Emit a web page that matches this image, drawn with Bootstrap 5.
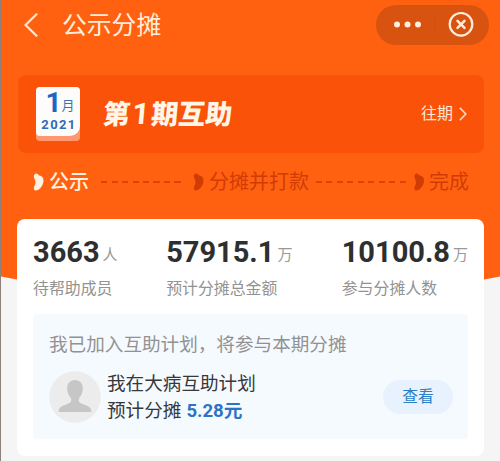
<!DOCTYPE html>
<html lang="zh-CN">
<head>
<meta charset="utf-8">
<meta name="viewport" content="width=device-width, initial-scale=1">
<title>公示分摊</title>
<link href="https://cdn.jsdelivr.net/npm/bootstrap@5.3.0/dist/css/bootstrap.min.css" rel="stylesheet">
<style>
body{font-family:Roboto,"Noto Sans CJK SC",sans-serif;background:#f5f5f5;line-height:1;color:#303133;}
svg{display:block;flex:none}
.screen{width:500px;height:461px;border-left:1px solid #8d7f7b;padding:0 16px}
.backdrop{left:0;top:0;z-index:0}
.topbar{height:50px;padding:0 0 0 7px;margin-right:-5px}
.topbar h1{font-size:24.8px;font-weight:400;color:#ffeedd;margin:2px 0 0 24px;line-height:40px}
.capsule{width:113px;height:40px;background:#d95310;border-radius:20px}
.period{height:78px;margin:25px 0 0 1px;background:#fa5208;border-radius:8px;padding:0 17px 0 18px}
.period h2{font-size:27px;font-weight:900;color:#fff6e8;margin:0 0 0 23px;line-height:40px;transform:skewX(-5deg)}
.period h2 span{font-weight:700;font-size:30px;margin:0 2px}
.past{font-size:16px;color:#ffe9d5;line-height:24px;gap:6px}
.calendar-box{width:44px;height:54px;background:#ff9870;border-radius:4px}
.calendar-sheet{width:44px;height:49px;background:#fdfcfb;border-radius:4px 4px 10px 4px;color:#2c6cb8;padding-top:5px}
.month{font-size:28px;font-weight:700;line-height:22px;color:#1c66c6;padding-left:4px}
.month small{font-size:13px;font-weight:400;line-height:14px;color:#3975b4;padding-bottom:1px}
.year{font-size:13px;font-weight:700;letter-spacing:1.4px;line-height:13px;margin-top:4px;padding-left:2px}
.steps{height:56px;margin:0 15px 0 15px;color:#d13c05;font-size:20px;line-height:30px;padding-top:2px}
.steps .now{color:#fff0df;font-weight:500}
.dash{height:2px;background:repeating-linear-gradient(90deg,#dc4305 0 6px,transparent 6px 10.5px)}
.dash-a{width:80px;margin:0 11px 0 12px}
.dash-b{width:91px;margin:0 6px 0 7px}
.summary{height:237px;margin-top:10px;border-radius:8px;background:#fff;padding:17px 16px 0}
.figure-row{height:78px}
.amount{font-size:29px;font-weight:700;line-height:32px;color:#2d2f31}
.unit{font-size:15px;color:#999;line-height:20px;margin:6px 0 0 3px}
.caption-text{font-size:15.9px;color:#929292;line-height:24px;margin-top:9px}
.stat-a{width:133.5px}
.stat-b{width:176px}
.joined{height:125px;background:#f5faff;border-radius:4px;padding:17px 15px 0 16px;font-size:18.6px}
.joined p{margin:0 0 10px;color:#929292;line-height:28px}
.mine{line-height:27px;color:#36383a;margin:2px 0 0 6px}
.mine strong{font-size:18.6px;color:#2c73c5;margin-left:5px}
.view-btn,.view-btn:hover{width:70px;height:34px;background:#e8f1fe;color:#2c7fc5;border:0;font-size:15.8px;line-height:1;padding:0}
</style>
<script src="https://cdn.jsdelivr.net/npm/bootstrap@5.3.0/dist/js/bootstrap.bundle.min.js"></script>
</head>
<body class="overflow-hidden">
<svg width="0" height="0" class="position-absolute" aria-hidden="true">
  <symbol id="petal" viewBox="0 0 11 18"><path fill="currentColor" d="M1.600 1.300C2.800-.1 5 .5 6 2.500 9 2.300 10.700 4.800 10.500 8 10.300 11.600 7.800 15.600 4.800 17.100 2.700 18.100.8 17.100.8 15.200.8 13.400 2.400 12.300 2.500 9.600 2.500 7.400 1.500 6.200 1.100 4.800.7 3.400.8 2.200 1.600 1.300Z"/></symbol>
</svg>
<div class="screen position-relative">
  <svg class="backdrop position-absolute" width="499" height="300" viewBox="0 0 499 300" aria-hidden="true"><path fill="#ff6110" d="M0 0H499V276.500Q250 328 0 276.500Z"/></svg>
  <div class="position-relative">
    <header class="topbar d-flex align-items-center">
      <svg width="14" height="24" viewBox="0 0 14 24" fill="none" stroke="#ffe9d3" stroke-width="2.200" stroke-linecap="round" stroke-linejoin="round"><path d="M12.500 1.300 1.500 12l11 10.700"/></svg>
      <h1>公示分摊</h1>
      <div class="capsule ms-auto">
        <svg width="113" height="40" viewBox="0 0 113 40"><g fill="#ffeedd"><circle cx="21" cy="19.500" r="3"/><circle cx="31.500" cy="19.500" r="3"/><circle cx="42" cy="19.500" r="3"/></g><path stroke="#d34f10" d="M58.500 11v18"/><g fill="none" stroke="#ffeedd" stroke-linecap="round"><circle cx="85" cy="19.300" r="11.300" stroke-width="2.200"/><path stroke-width="2.500" d="m81.500 15.800 7 7m0-7-7 7"/></g></svg>
      </div>
    </header>
    <section class="period d-flex align-items-center">
      <div class="calendar-box">
        <div class="calendar-sheet d-flex flex-column align-items-center">
          <div class="month d-flex align-items-end">1<small>月</small></div>
          <div class="year">2021</div>
        </div>
      </div>
      <h2>第<span>1</span>期互助</h2>
      <a class="past ms-auto d-flex align-items-center text-decoration-none">往期<svg width="8" height="14" viewBox="0 0 8 14" fill="none" stroke="#ffdcc0" stroke-width="1.600"><path d="m.8.8 6 6.200-6 6.200"/></svg></a>
    </section>
    <div class="steps d-flex align-items-center text-nowrap">
      <div class="now d-flex align-items-center"><svg class="me-1" width="13" height="18"><use href="#petal"/></svg>公示</div>
      <div class="dash dash-a"></div>
      <div class="d-flex align-items-center"><svg class="me-1" width="13" height="18"><use href="#petal"/></svg>分摊并打款</div>
      <div class="dash dash-b"></div>
      <div class="d-flex align-items-center"><svg class="me-1" width="12" height="18"><use href="#petal"/></svg>完成</div>
    </div>
    <main class="summary">
      <div class="figure-row d-flex">
        <div class="stat-a"><div class="d-flex align-items-center"><span class="amount">3663</span><span class="unit">人</span></div><div class="caption-text">待帮助成员</div></div>
        <div class="stat-b"><div class="d-flex align-items-center"><span class="amount">57915.1</span><span class="unit">万</span></div><div class="caption-text">预计分摊总金额</div></div>
        <div class="text-nowrap"><div class="d-flex align-items-center"><span class="amount">10100.8</span><span class="unit">万</span></div><div class="caption-text">参与分摊人数</div></div>
      </div>
      <section class="joined">
        <p class="text-nowrap">我已加入互助计划，将参与本期分摊</p>
        <div class="d-flex align-items-center text-nowrap">
          <svg width="52" height="52" viewBox="0 0 52 52"><circle cx="26" cy="26" r="25.800" fill="#ececec"/><path fill="#c6c6c6" d="M26 9C31 9 34 12.500 33.800 18 33.600 22 32 25 30.500 26.500 29.500 28 29.500 30.500 30.500 31.300 33 33.500 40 34.500 41.500 37.500 42.200 38.700 42.400 39.500 42.400 41H9.600C9.600 39.500 9.800 38.700 10.500 37.500 12 34.500 19 33.500 21.500 31.300 22.500 30.500 22.500 28 21.500 26.500 20 25 18.400 22 18.200 18 18 12.500 21 9 26 9Z"/></svg>
          <div class="mine">我在大病互助计划<br>预计分摊<strong>5.28元</strong></div>
          <button type="button" class="view-btn btn rounded-pill ms-auto">查看</button>
        </div>
      </section>
    </main>
  </div>
</div>
</body>
</html>
